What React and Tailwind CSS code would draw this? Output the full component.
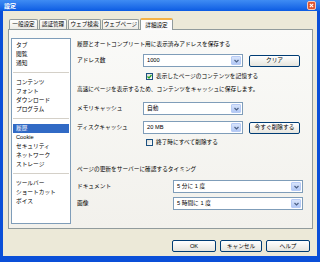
import React from "react";

const font = "font-['Liberation_Sans','Noto_Sans_CJK_JP',sans-serif]";

const tabs = [
  { label: "一般設定", w: "w-[29px]" },
  { label: "認証管理", w: "w-[28px]" },
  { label: "ウェブ検索", w: "w-[33px]" },
  { label: "ウェブページ", w: "w-[37px]" },
];

const groups = [
  ["タブ", "閲覧", "通知"],
  ["コンテンツ", "フォント", "ダウンロード", "プログラム"],
  ["履歴", "Cookie", "セキュリティ", "ネットワーク", "ストレージ"],
  ["ツールバー", "ショートカット", "ボイス"],
];

function Select({ value, className }) {
  return (
    <div className={`h-[13px] flex items-stretch bg-white border border-[#7F9DB9] ${className}`}>
      <span className="flex-1 pl-[3px] leading-[11px] text-[5.7px] text-black whitespace-nowrap">{value}</span>
      <span className="w-[10px] m-[1px] rounded-[1px] bg-gradient-to-b from-[#D8E4FB] to-[#B2C8F5] border border-[#B7CBF5] flex items-center justify-center">
        <svg width="5" height="4" viewBox="0 0 5 4">
          <path d="M0.5 1 L2.5 3 L4.5 1" stroke="#4D6185" strokeWidth="1.2" fill="none" />
        </svg>
      </span>
    </div>
  );
}

function Button({ children, className }) {
  return (
    <div className={`h-[12px] rounded-[2px] border border-[#003C74] bg-gradient-to-b from-white to-[#E6E5DE] flex items-center justify-center text-[5.7px] text-black whitespace-nowrap ${className}`}>
      {children}
    </div>
  );
}

function Check({ checked, label }) {
  return (
    <div className="flex items-center gap-[3px] pl-[69px] h-[9px]">
      <span className="w-[7px] h-[7px] border border-[#1C5180] bg-gradient-to-br from-[#DCDCD7] to-white flex items-center justify-center">
        {checked && (
          <svg width="5" height="5" viewBox="0 0 5 5">
            <path d="M0.5 2.5 L2 4 L4.5 1" stroke="#21A121" strokeWidth="1.2" fill="none" />
          </svg>
        )}
      </span>
      <span className="text-[5.7px] leading-[9px] text-black whitespace-nowrap">{label}</span>
    </div>
  );
}

export default function App() {
  return (
    <div className={`w-[320px] h-[262px] bg-[#0A4FD8] flex flex-col ${font}`}>
      {/* title bar */}
      <div className="h-[11px] bg-gradient-to-b from-[#3F8CF3] to-[#0A5BE3] flex items-center px-[4px]">
        <span className="flex-1 text-[6px] font-bold text-white leading-none">設定</span>
        <span className="w-[9px] h-[9px] rounded-[2px] bg-[#E0552F] border border-[#F3C9BC] flex items-center justify-center">
          <svg width="5" height="5" viewBox="0 0 5 5">
            <path d="M0.8 0.8 L4.2 4.2 M4.2 0.8 L0.8 4.2" stroke="white" strokeWidth="1.1" />
          </svg>
        </span>
      </div>

      {/* client */}
      <div className="flex-1 mx-[3px] mb-[6px] bg-[#ECE9D8] flex flex-col">
        {/* tabs */}
        <div className="flex items-end pl-[6px] pt-[6px] h-[18px]">
          {tabs.map((t) => (
            <div
              key={t.label}
              className={`${t.w} h-[10px] mr-[1px] rounded-t-[2px] border border-b-0 border-[#919B9C] bg-gradient-to-b from-white to-[#ECEBE6] flex items-center justify-center text-[5.6px] text-black whitespace-nowrap`}
            >
              {t.label}
            </div>
          ))}
          <div className="w-[33px] h-[12px] -mb-[1px] relative rounded-t-[2px] border-x border-[#919B9C] border-t-2 border-t-[#F4B246] bg-[#FCFCFE] flex items-center justify-center text-[5.6px] text-black whitespace-nowrap">
            詳細設定
          </div>
        </div>

        {/* panel */}
        <div className="ml-[5px] mr-[4px] h-[200px] border border-[#919B9C] bg-gradient-to-b from-[#FAFAF8] to-[#F2F1EC] flex pl-[2px] pt-[8px] pb-[4px]">
          <div className="w-[60px] h-full bg-white border border-[#7F9DB9] pt-[2px]">
            {groups.map((g, gi) => (
              <div key={gi} className={gi < groups.length - 1 ? "border-b border-[#D4D0C8] mx-[1px] pb-[4px] mb-[5px]" : "mx-[1px]"}>
                {g.map((item) => (
                  <div
                    key={item}
                    className={`h-[9px] pl-[3px] text-[5.7px] leading-[9px] whitespace-nowrap ${item === "履歴" ? "bg-[#316AC5] text-white" : "text-black"}`}
                  >
                    {item}
                  </div>
                ))}
              </div>
            ))}
          </div>

          <div className="flex-1 pl-[6px] pt-[2px] flex flex-col text-[5.7px] text-black whitespace-nowrap">
            <div className="h-[9px] leading-[9px]">履歴とオートコンプリート用に表示済みアドレスを保存する</div>
            <div className="mt-[5px] flex items-center">
              <span className="w-[66px]">アドレス数</span>
              <Select value="1000" className="w-[100px]" />
              <Button className="ml-[6px] w-[51px]">クリア</Button>
            </div>
            <div className="mt-[5px]">
              <Check checked label="表示したページのコンテンツを記憶する" />
            </div>
            <div className="mt-[4px] h-[9px] leading-[9px]">高速にページを表示するため、コンテンツをキャッシュに保存します。</div>
            <div className="mt-[8px] flex items-center">
              <span className="w-[66px]">メモリキャッシュ</span>
              <Select value="自動" className="w-[100px]" />
            </div>
            <div className="mt-[6px] flex items-center">
              <span className="w-[66px]">ディスクキャッシュ</span>
              <Select value="20 MB" className="w-[100px]" />
              <Button className="ml-[6px] w-[51px]">今すぐ削除する</Button>
            </div>
            <div className="mt-[4px]">
              <Check label="終了時にすべて削除する" />
            </div>
            <div className="mt-[18px] h-[9px] leading-[9px]">ページの更新をサーバーに確認するタイミング</div>
            <div className="mt-[6px] flex items-center">
              <span className="w-[96px]">ドキュメント</span>
              <Select value="5 分に 1 度" className="w-[130px]" />
            </div>
            <div className="mt-[4px] flex items-center">
              <span className="w-[96px]">画像</span>
              <Select value="5 時間に 1 度" className="w-[130px]" />
            </div>
          </div>
        </div>

        {/* buttons */}
        <div className="flex justify-end gap-[4px] pr-[7px] mt-[11px]">
          <Button className="w-[44px]">OK</Button>
          <Button className="w-[42px]">キャンセル</Button>
          <Button className="w-[44px]">ヘルプ</Button>
        </div>
      </div>
    </div>
  );
}
